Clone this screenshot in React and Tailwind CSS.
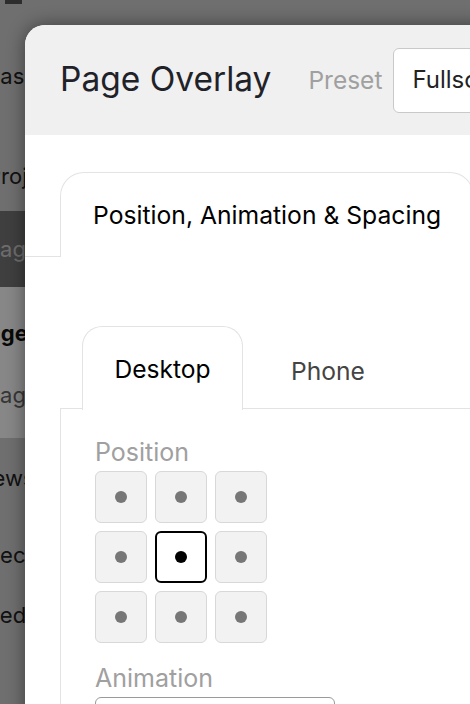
import { useState } from "react";

const FONT = "font-['Inter','Noto_Sans',sans-serif]";

const positions = [
  "top-left", "top", "top-right",
  "left", "center", "right",
  "bottom-left", "bottom", "bottom-right",
];

function Backdrop() {
  // the page behind the dialog, only a sliver of it shows on the left
  return (
    <div className="flex flex-col text-[22px] text-[#222]">
      <div className="h-[26px] px-[5px]">
        <div className="w-[17px] h-[4px] bg-[#555]" />
      </div>
      <div className="h-[100px] flex items-center">
        <span className="-ml-[53px]">Canvas</span>
      </div>
      <div className="h-[85px] pt-[15px] flex items-center">
        <span className="-ml-[13px]">Projects</span>
      </div>
      <div className="h-[76px] bg-[#777] flex items-center">
        <span className="-ml-[14px] text-[#cfcfcf]">Pages</span>
      </div>
      <div className="bg-white">
        <div className="h-[92px] flex items-center">
          <span className="-ml-[26px] font-bold text-[#111]">Pages</span>
        </div>
        <div className="h-[59px] pb-[27px] flex items-center">
          <span className="-ml-[14px] text-[#666]">Pages</span>
        </div>
      </div>
      <div className="h-[80px] flex items-center">
        <span className="-ml-[28px]">Views</span>
      </div>
      <div className="h-[74px] flex items-center">
        <span className="-ml-[14px]">Sections</span>
      </div>
      <div className="h-[46px] flex items-center">
        <span className="-ml-[14px]">Redirects</span>
      </div>
    </div>
  );
}

function PositionGrid({ value, onChange }) {
  return (
    <div className="grid grid-cols-[repeat(3,52px)] gap-[8px]">
      {positions.map((p) => {
        const active = p === value;
        return (
          <button
            key={p}
            onClick={() => onChange(p)}
            className={`h-[52px] flex items-center justify-center rounded-[6px] ${
              active
                ? "bg-white border-2 border-black"
                : "bg-[#f2f2f2] border-[1.5px] border-[#d8d8d8]"
            }`}
          >
            <span
              className={`w-[12px] h-[12px] rounded-full ${
                active ? "bg-black" : "bg-[#777]"
              }`}
            />
          </button>
        );
      })}
    </div>
  );
}

export default function App() {
  const [pos, setPos] = useState("center");
  const [device, setDevice] = useState("desktop");

  return (
    <div className={`relative w-[470px] h-[704px] overflow-hidden bg-[#d2d2d2] ${FONT}`}>
      <Backdrop />

      {/* Dim layer */}
      <div className="absolute inset-0 bg-black/[0.47]" />

      {/* Dialog */}
      <div className="absolute left-[25px] top-[25px] w-[640px] h-[720px] bg-white rounded-tl-[20px] overflow-hidden shadow-[0_0_18px_rgba(0,0,0,0.45)]">
        {/* Header */}
        <div className="h-[110px] bg-[#f0f0f0] flex items-center pl-[35px]">
          <h1 className="text-[33.5px] text-[#1f2329] leading-none">Page Overlay</h1>
          <span className="ml-[37px] text-[24.5px] text-[#a0a0a0]">Preset</span>
          <div className="ml-[11px] w-[240px] h-[65px] bg-white border-[1.5px] border-[#c9c9c9] rounded-[6px] flex items-center px-[18px] text-[24px] text-[#222]">
            Fullscreen
          </div>
        </div>

        {/* Outer tabs */}
        <div className="pt-[37px] pl-[35px] border-b-[1.5px] border-[#e3e3e3] flex">
          <div className="h-[85px] -mb-[1.5px] px-[32px] pt-[2px] flex items-center bg-white border-[1.5px] border-b-0 border-[#e3e3e3] rounded-t-[24px] text-[24.7px] text-black whitespace-nowrap">
            Position, Animation &amp; Spacing
          </div>
        </div>

        {/* Outer panel */}
        <div className="pl-[35px] pt-[69px]">
          {/* Inner tabs */}
          <div className="flex pl-[22px] border-b-[1.5px] border-[#e3e3e3]">
            <button
              onClick={() => setDevice("desktop")}
              className={`h-[84px] -mb-[1.5px] w-[161px] pt-[3px] flex items-center justify-center rounded-t-[20px] text-[24.6px] ${
                device === "desktop"
                  ? "bg-white border-[1.5px] border-b-0 border-[#e3e3e3] text-black"
                  : "text-[#444]"
              }`}
            >
              Desktop
            </button>
            <button
              onClick={() => setDevice("phone")}
              className={`h-[84px] -mb-[1.5px] ml-[15px] px-[33px] pt-[7px] flex items-center rounded-t-[20px] text-[24.6px] ${
                device === "phone"
                  ? "bg-white border-[1.5px] border-b-0 border-[#e3e3e3] text-black"
                  : "text-[#444]"
              }`}
            >
              Phone
            </button>
          </div>

          {/* Inner panel */}
          <div className="border-l-[1.5px] border-[#e3e3e3] pl-[34px] pt-[29px] h-[400px]">
            <div className="text-[25px] leading-[28px] text-[#a0a0a0] mb-[5px]">Position</div>
            <PositionGrid value={pos} onChange={setPos} />
            <div className="mt-[21px] text-[25px] leading-[28px] text-[#a0a0a0] mb-[5px]">Animation</div>
            <div className="w-[240px] h-[52px] border-[1.5px] border-[#9a9a9a] rounded-[6px] bg-white" />
          </div>
        </div>
      </div>
    </div>
  );
}
